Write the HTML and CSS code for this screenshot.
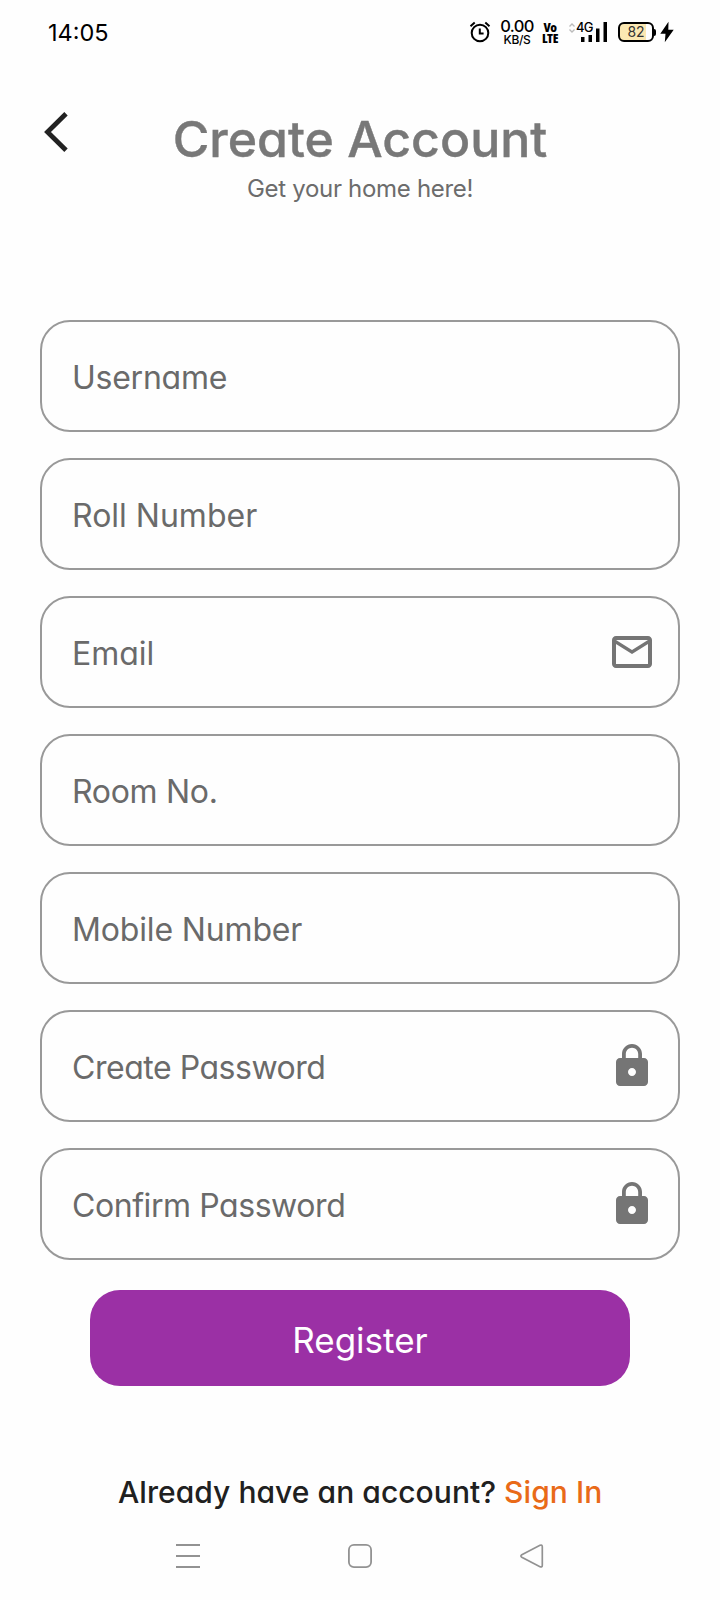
FILE: index.html
```html
<!DOCTYPE html>
<html lang="en">
<head>
<meta charset="utf-8">
<title>Create Account</title>
<link rel="stylesheet" href="styles.css">
</head>
<body>
<div class="screen">
  <div class="status">
    <span class="clock">14:05</span>
    <div class="indicators">
      <svg class="alarm" width="22" height="22" viewBox="0 0 22 22" fill="none" stroke="#000" stroke-width="2"><circle cx="11" cy="12" r="8.300"/><path d="M10.800 7.500v5.100h3.800M1.500 5.200 5.700 1.600M20.500 5.200 16.300 1.600"/></svg>
      <div class="speed"><span class="rate">0.00</span><span class="unit">KB/S</span></div>
      <div class="volte"><span>Vo</span><span>LTE</span></div>
      <div class="signal">
        <svg width="38" height="22" viewBox="0 0 38 22"><path d="M.5 5.500 3 3 5.500 5.500M.5 8.500 3 11 5.500 8.500" fill="none" stroke="#bbb" stroke-width="1.300"/><path d="M12 16h3.500v5H12zM19.500 14h3.500v7h-3.500zM27 7.500h3.500V21H27zM34.500 1H38v20h-3.500z"/></svg>
        <span class="network">4G</span>
      </div>
      <div class="battery"><span>82</span></div>
      <svg class="bolt" width="14" height="22" viewBox="0 0 14 22"><path d="M8.500.8.300 12.700h5.200L4.800 21.200 13.700 8.800H8.300z"/></svg>
    </div>
  </div>
  <header class="header">
    <svg class="back" width="24" height="40" viewBox="0 0 24 40" fill="none" stroke="#222" stroke-width="4.800"><path d="M22 1.800 3.500 20 22 38.200"/></svg>
    <div class="heading">
      <h1 class="title">Create Account</h1>
      <p class="subtitle">Get your home here!</p>
    </div>
  </header>
  <main class="form">
    <div class="field"><span class="label username">Username</span></div>
    <div class="field"><span class="label roll">Roll Number</span></div>
    <div class="field"><span class="label email">Email</span>
      <svg class="icon" width="48" height="48" viewBox="0 0 24 24"><path d="M22 6c0-1.100-.9-2-2-2H4c-1.100 0-2 .9-2 2v12c0 1.100.9 2 2 2h16c1.100 0 2-.9 2-2V6zm-2 0-8 5-8-5h16zm0 12H4V8l8 5 8-5v10z"/></svg>
    </div>
    <div class="field"><span class="label room">Room No.</span></div>
    <div class="field"><span class="label mobile">Mobile Number</span></div>
    <div class="field"><span class="label create">Create Password</span>
      <svg class="icon" width="48" height="48" viewBox="0 0 24 24"><path d="M18 8h-1V6c0-2.760-2.240-5-5-5S7 3.240 7 6v2H6c-1.100 0-2 .9-2 2v10c0 1.100.9 2 2 2h12c1.100 0 2-.9 2-2V10c0-1.100-.9-2-2-2zm-6 9c-1.100 0-2-.9-2-2s.9-2 2-2 2 .9 2 2-.9 2-2 2zm3.100-9H8.900V6c0-1.710 1.390-3.100 3.100-3.100s3.100 1.390 3.100 3.100v2z"/></svg>
    </div>
    <div class="field"><span class="label confirm">Confirm Password</span>
      <svg class="icon" width="48" height="48" viewBox="0 0 24 24"><path d="M18 8h-1V6c0-2.760-2.240-5-5-5S7 3.240 7 6v2H6c-1.100 0-2 .9-2 2v10c0 1.100.9 2 2 2h12c1.100 0 2-.9 2-2V10c0-1.100-.9-2-2-2zm-6 9c-1.100 0-2-.9-2-2s.9-2 2-2 2 .9 2 2-.9 2-2 2zm3.100-9H8.900V6c0-1.710 1.390-3.100 3.100-3.100s3.100 1.390 3.100 3.100v2z"/></svg>
    </div>
  </main>
  <button class="register">Register</button>
  <p class="footer"><span class="question">Already have an account?</span><a class="signin">Sign In</a></p>
  <nav class="nav">
    <svg width="24" height="26" viewBox="0 0 24 26" stroke="#929292" stroke-width="2"><path d="M0 2h24M0 13h24M0 24h24"/></svg>
    <svg width="24" height="26" viewBox="0 0 24 26" fill="none" stroke="#929292" stroke-width="1.800"><rect x=".9" y="1.900" width="22.200" height="22.200" rx="5"/></svg>
    <svg width="24" height="26" viewBox="0 0 24 26" fill="none" stroke="#929292" stroke-width="1.700"><path d="M1.800 11.700 20 2.300q2.300-.9 2.300 1.500v18.400q0 2.400-2.300 1.500L1.800 14.300q-1.800-1.300 0-2.600z"/></svg>
  </nav>
</div>
</body>
</html>
```
FILE: styles.css
```css
* { box-sizing: border-box; }
body { margin: 0; background: #fefefe; font-family: Inter, "Liberation Sans", sans-serif; font-feature-settings: "cv11"; }
h1, p { margin: 0; }
.screen { width: 720px; height: 1600px; overflow: hidden; display: flex; flex-direction: column; }
.status { height: 64px; padding: 0 46px 0 48px; display: flex; justify-content: space-between; align-items: center; color: #000; }
.clock { font-size: 23.500px; line-height: 28px; padding-top: 1px; white-space: nowrap; }
.indicators { display: flex; align-items: center; height: 26px; }
.alarm { margin-right: 8px; }
.speed { width: 36px; height: 27px; display: flex; flex-direction: column; align-items: center; margin-right: 7px; }
.rate { font-size: 16.500px; line-height: 15px; font-weight: 500; letter-spacing: -0.6px; }
.unit { font-size: 12px; line-height: 12px; font-weight: 500; letter-spacing: -0.3px; }
.volte { width: 16px; height: 22px; margin: 1px 11px 0 0; display: flex; flex-direction: column; align-items: center; font: 800 13px/11px "Open Sans", sans-serif; font-stretch: 75%; letter-spacing: -0.4px; }
.signal { position: relative; width: 38px; height: 22px; margin-right: 11px; }
.signal svg { display: block; }
.network { position: absolute; left: 7px; top: 0; font-size: 13px; line-height: 12px; font-weight: 500; letter-spacing: -0.9px; }
.battery { position: relative; width: 36px; height: 20px; border: 2px solid #000; border-radius: 6px; background: linear-gradient(90deg, #fbe8b2 82%, #fefefe 82%); display: flex; align-items: center; justify-content: center; font-size: 14px; line-height: 16px; color: #333; }
.battery::after { content: ""; position: absolute; right: -4px; top: 5px; width: 2px; height: 7px; background: #000; border-radius: 0 2px 2px 0; }
.bolt { margin-left: 6px; }
.header { position: relative; height: 256px; padding-top: 45px; text-align: center; }
.back { position: absolute; left: 44px; top: 48px; }
.title { font-size: 50px; line-height: 60px; font-weight: 500; color: #787878; -webkit-text-stroke: 0.4px #787878; margin-bottom: 5px; white-space: nowrap; }
.subtitle { font-size: 24px; line-height: 30px; letter-spacing: -0.300px; color: #6c6c6c; }
.form { padding: 0 40px; display: flex; flex-direction: column; gap: 26px; }
.field { height: 112px; border: 2px solid #999; border-radius: 30px; padding: 0 22px 0 30px; display: flex; align-items: center; justify-content: space-between; }
.label { font-size: 32px; line-height: 40px; padding-top: 4px; color: #6a6a6a; white-space: nowrap; }
.username { letter-spacing: -0.250px; }
.room { letter-spacing: -0.300px; }
.mobile { letter-spacing: -0.150px; }
.create { letter-spacing: -0.470px; }
.confirm { letter-spacing: -0.430px; }
.icon { fill: #757575; }
.register { margin: 30px 90px 0; height: 96px; border: 0; border-radius: 30px; padding: 4px 0 0; background: #9b30a5; color: #fff; font: 400 35px/42px Inter, sans-serif; }
.footer { margin-top: 86px; padding-left: 118px; height: 40px; line-height: 40px; display: flex; font-size: 30px; font-weight: 500; color: #202020; white-space: nowrap; }
.question { width: 386px; letter-spacing: 0.050px; }
.signin { color: #e96a18; letter-spacing: 0.100px; }
.nav { margin-top: 31px; padding: 0 176px; display: flex; justify-content: space-between; }
```
